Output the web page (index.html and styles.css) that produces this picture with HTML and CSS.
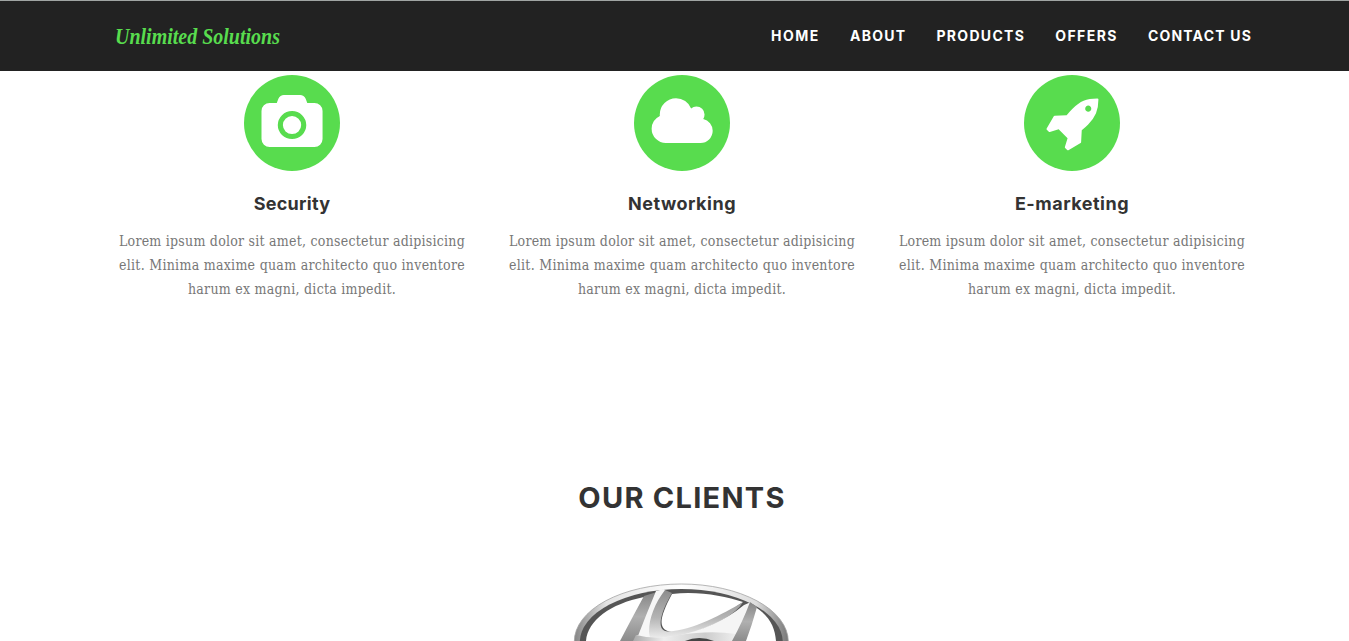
FILE: index.html
```html
<!DOCTYPE html>
<html lang="en"><head><meta charset="utf-8"><title>Unlimited Solutions</title><link rel="stylesheet" href="styles.css"></head>
<body>
<header class="navbar"><div class="container bar">
<a class="brand">Unlimited Solutions</a>
<nav class="menu"><a class="home">HOME</a><a class="about">ABOUT</a><a class="products">PRODUCTS</a><a class="offers">OFFERS</a><a class="contact">CONTACT US</a></nav>
</div></header>
<main>
<section class="container services">
<article class="service"><svg class="icon" viewBox="0 0 96 96"><circle class="disc" cx="48" cy="48" r="48"/><path transform="translate(17.500 14) scale(.0318 .0313)" d="M960 864q119 0 203.500 84.500t84.500 203.500-84.500 203.500-203.500 84.500-203.500-84.500-84.500-203.500 84.500-203.500 203.500-84.500zm704-416q106 0 181 75t75 181v896q0 106-75 181t-181 75h-1408q-106 0-181-75t-75-181v-896q0-106 75-181t181-75h224l51-136q19-49 69.500-84.500t103.500-35.500h512q53 0 103.500 35.500t69.500 84.500l51 136h224zm-704 1152q185 0 316.500-131.500t131.500-316.500-131.500-316.500-316.500-131.500-316.500 131.500-131.500 316.500 131.500 316.500 316.500 131.500z"/></svg>
<h3 class="security">Security</h3><p><span class="l1">Lorem ipsum dolor sit amet, consectetur adipisicing</span><span class="l2">elit. Minima maxime quam architecto quo inventore</span><span class="l3">harum ex magni, dicta impedit.</span></p></article>
<article class="service"><svg class="icon" viewBox="0 0 96 96"><circle class="disc" cx="48" cy="48" r="48"/><path transform="translate(15.600 19.200) scale(.0318)" d="M1984 1152q0 159-112.500 271.500t-271.500 112.500h-1088q-185 0-316.500-131.500t-131.500-316.500q0-132 71-241.500t187-163.500q-2-28-2-43 0-212 150-362t362-150q158 0 286.500 88t187.500 230q70-62 166-62 106 0 181 75t75 181q0 75-41 138 129 30 213 134.500t84 239.500z"/></svg>
<h3>Networking</h3><p><span class="l1">Lorem ipsum dolor sit amet, consectetur adipisicing</span><span class="l2">elit. Minima maxime quam architecto quo inventore</span><span class="l3">harum ex magni, dicta impedit.</span></p></article>
<article class="service"><svg class="icon" viewBox="0 0 96 96"><circle class="disc" cx="48" cy="48" r="48"/><path transform="translate(21.500 19.400) scale(.0318)" d="M1440 448q0-40-28-68t-68-28-68 28-28 68 28 68 68 28 68-28 28-68zm224-288q0 249-75.500 430.500t-253.500 360.500q-81 80-195 176l-20 379q-2 16-16 26l-384 224q-7 4-16 4-12 0-23-9l-64-64q-13-14-8-32l85-276-281-281-276 85q-3 1-9 1-14 0-23-9l-64-64q-17-19-5-39l224-384q10-14 26-16l379-20q96-114 176-195 188-187 358-258t431-71q14 0 24 9.500t10 22.500z"/></svg>
<h3>E-marketing</h3><p><span class="l1">Lorem ipsum dolor sit amet, consectetur adipisicing</span><span class="l2">elit. Minima maxime quam architecto quo inventore</span><span class="l3">harum ex magni, dicta impedit.</span></p></article>
</section>
<section class="container clients"><h2>OUR CLIENTS</h2>
<svg class="emblem" viewBox="0 0 240 66">
<defs><linearGradient id="rim" x1="0" x2="1"><stop offset="0" stop-color="#858585"/><stop offset=".15" stop-color="#e4e4e4"/><stop offset=".5" stop-color="#fff"/><stop offset=".85" stop-color="#ddd"/><stop offset="1" stop-color="#777"/></linearGradient>
<linearGradient id="steel" x1="0" y1="0" x2="0" y2="1"><stop offset="0" stop-color="#858585"/><stop offset=".5" stop-color="#b0b0b0"/><stop offset="1" stop-color="#8c8c8c"/></linearGradient>
<linearGradient id="arch" x1="0" y1="0" x2="0" y2="1"><stop offset="0" stop-color="#8c8c8c"/><stop offset=".55" stop-color="#b4b4b4"/><stop offset="1" stop-color="#f2f2f2"/></linearGradient>
<linearGradient id="base" x1="0" x2="1"><stop offset="0" stop-color="#aaa"/><stop offset=".3" stop-color="#eee"/><stop offset=".7" stop-color="#ccc"/><stop offset="1" stop-color="#eee"/></linearGradient></defs>
<ellipse cx="121.300" cy="66.500" rx="107" ry="57.500" fill="url(#rim)" stroke="#a5a5a5" stroke-width=".8"/>
<ellipse cx="121.300" cy="67" rx="101.500" ry="53" fill="#555"/>
<path d="M26 66C28 45 50 29 84 22L61 66Z M112 19C139 16 164 21 183 27C166 39 145 51 119 57C96 59 98 45 112 19Z M195 32C210 41 215 53 216 66H180Z" fill="#fff"/>
<path d="M84 21L97 17Q89 38 77 66H60Q73 41 84 21Z" fill="url(#steel)"/>
<path d="M96 16L104 14L108 19Q91 43 98 66H76Q86 40 96 16Z" fill="#f6f6f6"/>
<path d="M105 15L112 18C99 40 96 57 109 56.500C133 55 163 39 183 27Q178 36 162 45C142 56 118 63 99 65Q89 66 89 57C89 43 95 28 105 15Z" fill="url(#arch)"/>
<path d="M77 60Q94 64 116 61Q156 53 184 30L191 27L177 66H74Z" fill="#f5f5f5"/>
<path d="M73 66L76 60Q96 65 119 60Q151 55 176 59L173 66Z" fill="url(#base)"/>
<path d="M190 27L197 32Q192 50 186 66H172Q183 46 190 27Z" fill="url(#steel)"/>
<path d="M125 66Q139 60 154 66Z" fill="#444"/>
</svg></section>
</main>
</body></html>
```
FILE: styles.css
```css
*{box-sizing:border-box}
body{margin:0;height:641px;overflow:hidden;background:#fff;font-family:Inter,sans-serif;color:#333}
.container{width:1170px;margin-left:97px}
.navbar{height:71px;background:#222;border-top:1px solid #a0a5a3}
.bar{display:flex;justify-content:space-between;align-items:center;height:70px;padding:0 15px 0 18px}
.brand{color:#58dc4e;font:italic 700 24px "Liberation Serif",serif;transform:scaleX(.833);transform-origin:left}
.menu{display:flex;gap:30px;padding-bottom:2px;color:#fff;font-size:14px;font-weight:700}
.home{letter-spacing:1.55px}
.about,.products{letter-spacing:1.3px}
.offers{letter-spacing:1.45px}
.contact{letter-spacing:1.18px}
.services{display:grid;grid-template-columns:repeat(3,1fr);padding-top:4px;text-align:center}
.icon{display:block;width:96px;height:96px;margin:0 auto;fill:#fff}
.disc{fill:#58dc4e}
h3{margin:22px 0 14px;font-size:18px;line-height:22px;font-weight:700;letter-spacing:.5px}
.security{letter-spacing:.25px}
p{margin:0;color:#777;font:14px/24px "DejaVu Serif Condensed","DejaVu Serif",serif}
p span{display:table;margin:0 auto;white-space:nowrap}
.l1{letter-spacing:.245px}
.l2{letter-spacing:.28px}
.l3{letter-spacing:.26px}
.clients{padding-top:177px;text-align:center}
h2{margin:0;font-size:29px;line-height:40px;font-weight:700;letter-spacing:1.25px}
.emblem{display:block;width:240px;height:66px;margin:57px 0 0 463px}
```
